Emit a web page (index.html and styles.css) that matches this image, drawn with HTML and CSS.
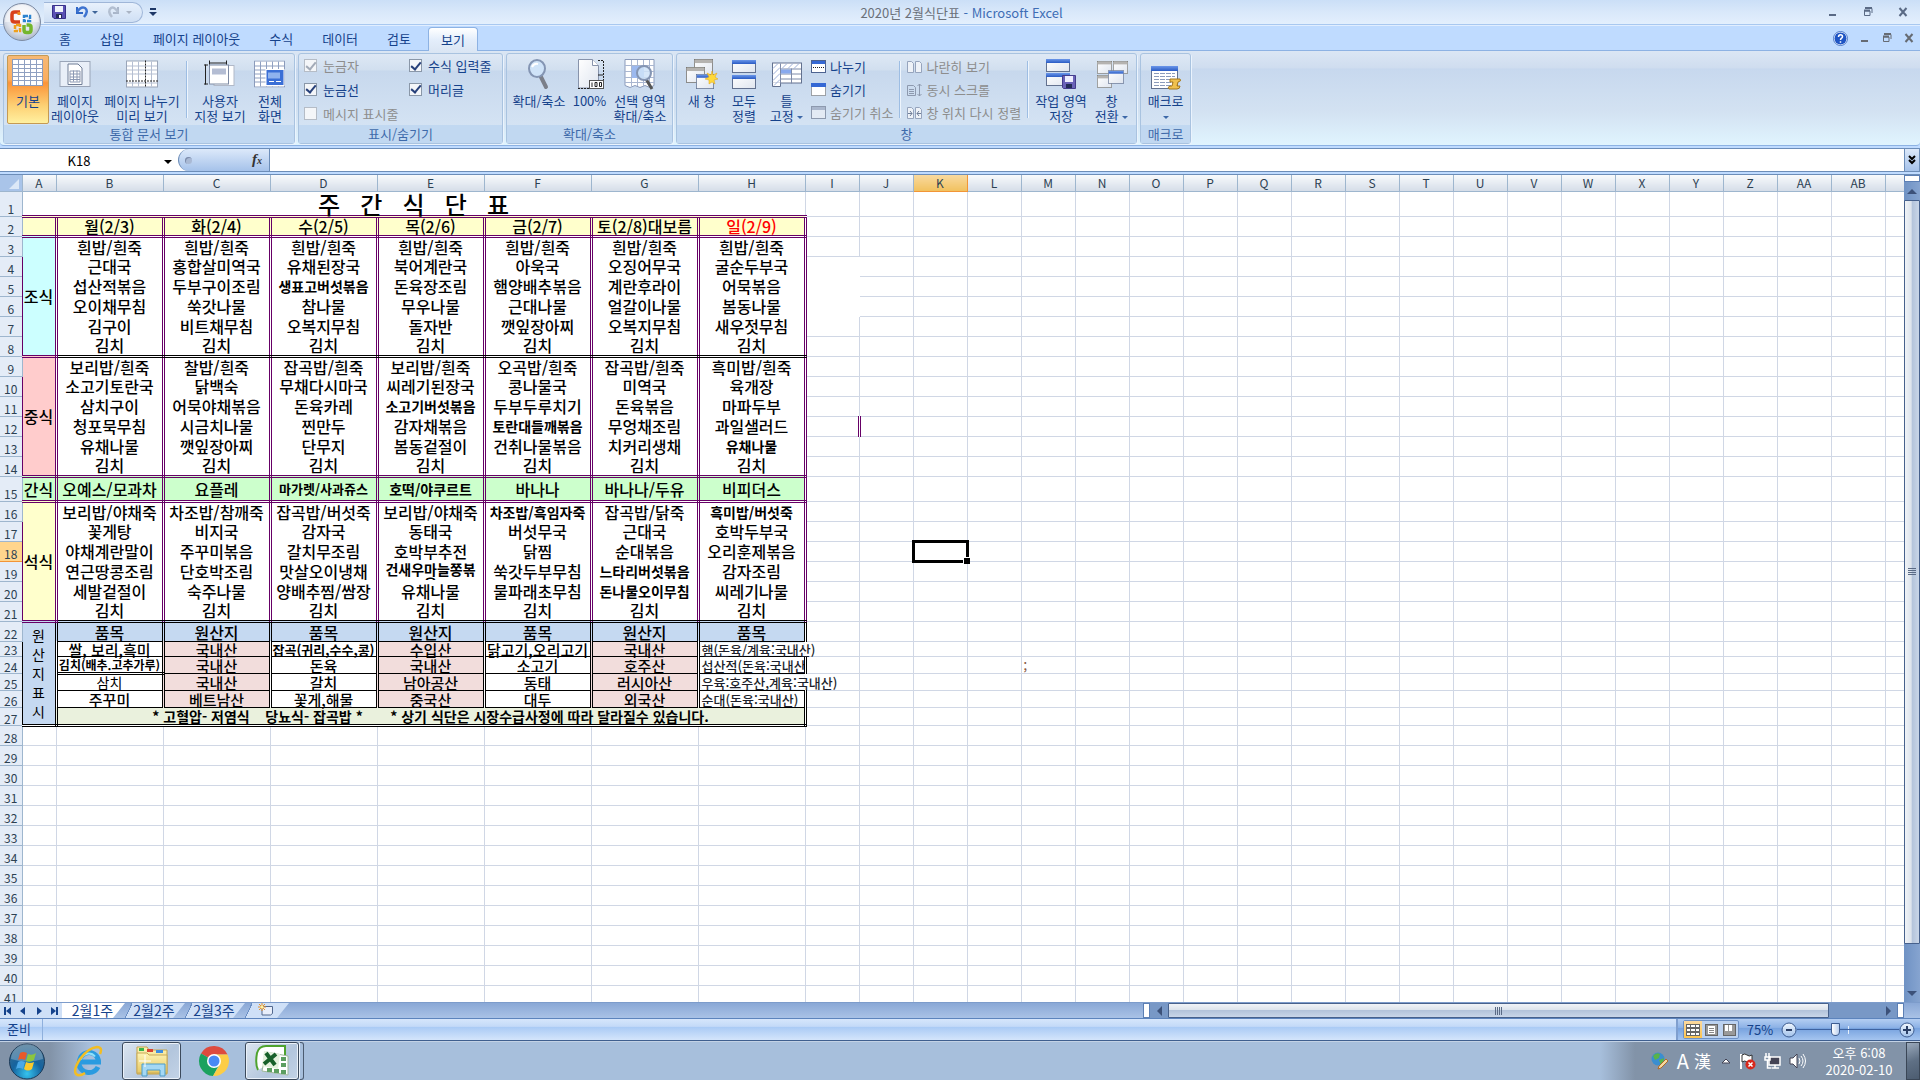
FILE: index.html
```
<!DOCTYPE html>
<html lang="ko">
<head>
<meta charset="utf-8">
<title>2020년 2월식단표 - Microsoft Excel</title>
<link rel="stylesheet" href="styles.css">
</head>
<body>
<svg class="defs" aria-hidden="true">
    <defs>
        <linearGradient id="blueBar" x1="0" y1="0" x2="0" y2="1"><stop offset="0" stop-color="#6b97ea"/><stop offset="1" stop-color="#2a5bc4"/></linearGradient>
        <linearGradient id="paper" x1="0" y1="0" x2="1" y2="1"><stop offset="0" stop-color="#fff"/><stop offset="1" stop-color="#dfe5ef"/></linearGradient>
        <linearGradient id="glass" x1="0" y1="0" x2="0" y2="1"><stop offset="0" stop-color="#f2f8ff"/><stop offset="1" stop-color="#9fc0ea"/></linearGradient>
        <radialGradient id="orb" cx="50%" cy="85%" r="85%"><stop offset="0" stop-color="#35c3ee"/><stop offset=".5" stop-color="#15639f"/><stop offset="1" stop-color="#3d6d8d"/></radialGradient>
        <radialGradient id="office" cx="50%" cy="35%" r="70%"><stop offset="0" stop-color="#fff"/><stop offset=".6" stop-color="#dfe3ec"/><stop offset="1" stop-color="#a2aec2"/></radialGradient>
        <linearGradient id="folder" x1="0" y1="0" x2="0" y2="1"><stop offset="0" stop-color="#fdf3b4"/><stop offset="1" stop-color="#e8c964"/></linearGradient>
        <symbol id="win" viewBox="0 0 24 20">
            <rect x=".5" y=".5" width="23" height="19" fill="url(#paper)" stroke="#62718f"/>
            <rect x="1" y="1" width="22" height="4" fill="url(#blueBar)"/>
        </symbol>
        <symbol id="wingray" viewBox="0 0 24 20">
            <rect x=".5" y=".5" width="23" height="19" fill="url(#paper)" stroke="#77756f"/>
            <rect x="1" y="1" width="22" height="4" fill="#b5b3b0"/>
        </symbol>
        <symbol id="sheet" viewBox="0 0 31 27">
            <rect x=".5" y=".5" width="30" height="26" fill="#fff" stroke="#8b9bbb"/>
            <path d="M6.500 1v25M12.500 1v25M18.500 1v25M24.500 1v25M1 5.500h29M1 9.500h29M1 13.500h29M1 17.500h29M1 21.500h29" stroke="#8fa0c1"/>
        </symbol>
    </defs>
</svg>

<header class="titlebar">
    <button class="office" aria-label="Office 단추">
        <svg width="40" height="40" viewBox="0 0 40 40">
            <circle cx="20" cy="20" r="18.500" fill="url(#office)" stroke="#7d8ba3"/>
            <path d="M3 20a17 17 0 0 1 34 0z" fill="#fff" opacity=".45"/>
            <path d="M18 10h-5q-3 0-3 2.500v5q0 2.500 3 2.500h5" fill="none" stroke="#d8401c" stroke-width="3.500"/>
            <path d="M17 10v3" stroke="#f08a1c" stroke-width="3"/>
            <path d="M22 14h6v5h-6z" fill="none" stroke="#2c83cf" stroke-width="2.500" stroke-dasharray="4 1"/>
            <path d="M18 23h-5v6h5z" fill="none" stroke="#f0a01c" stroke-width="2.500" stroke-dasharray="4 1"/>
            <path d="M22 23v5q0 2.500 2.500 2.500h2q2.500 0 2.500-2.500v-3q0-2-2.500-2h-2" fill="none" stroke="#74b62c" stroke-width="3.500"/>
        </svg>
    </button>
    <div class="qat">
        <button aria-label="저장"><svg width="14" height="14" viewBox="0 0 14 14"><path d="M.500.500h13v13H2L.500 12z" fill="#5a50b4" stroke="#37308a"/><rect x="3" y="1" width="8" height="6" fill="#eef2fb"/><rect x="4" y="9" width="6" height="4" fill="#222b55"/><rect x="7" y="10" width="2" height="3" fill="#fff"/></svg></button>
        <button aria-label="실행 취소"><svg width="23" height="14" viewBox="0 0 23 14"><path d="M2 2v6h6" fill="none" stroke="#2f66c6" stroke-width="2"/><path d="M2 7Q6 1 10 3q4 3-1 9" fill="none" stroke="#3f74d0" stroke-width="2.500"/><path d="M17 6h6l-3 3z" fill="#3f6599"/></svg></button>
        <button aria-label="다시 실행"><svg width="25" height="14" viewBox="0 0 25 14"><path d="M11 2v6H6" fill="none" stroke="#a9b6ca" stroke-width="2"/><path d="M11 7Q7 1 4 3q-4 3 1 9" fill="none" stroke="#b3bfd1" stroke-width="2.500"/><path d="M19 6h6l-3 3z" fill="#aab4c4"/></svg></button>
    </div>
    <button class="qat-more" aria-label="사용자 지정"><svg width="8" height="8" viewBox="0 0 8 8"><path d="M1 1h6" stroke="#1d3767" stroke-width="2"/><path d="M0 4h8L4 8z" fill="#1d3767"/></svg></button>
    <h1><span>2020년 2월식단표</span> - Microsoft Excel</h1>
    <div class="winbtns">
        <button aria-label="최소화"><svg width="10" height="10" viewBox="0 0 10 10"><path d="M1 8h7" stroke="#5a6a85" stroke-width="2"/></svg></button>
        <button aria-label="이전 크기로"><svg width="10" height="10" viewBox="0 0 10 10"><path d="M2 1.500h7V6M1 4h6v4.500H1.500V4" fill="none" stroke="#5a6a85"/><path d="M1 3.500h6M2 1h7" stroke="#5a6a85" stroke-width="2"/></svg></button>
        <button aria-label="닫기"><svg width="10" height="10" viewBox="0 0 10 10"><path d="M1.500 1l7 8M8.500 1l-7 8" stroke="#5a6a85" stroke-width="2"/></svg></button>
    </div>
</header>

<nav class="tabs">
    <button>홈</button><button>삽입</button><button>페이지 레이아웃</button><button>수식</button><button>데이터</button><button>검토</button><button class="active">보기</button>
    <div class="docbtns">
        <button aria-label="도움말"><svg width="15" height="15" viewBox="0 0 15 15"><circle cx="7.500" cy="7.500" r="6.500" fill="#1f55c4" stroke="#fff"/><circle cx="7.500" cy="7.500" r="7" fill="none" stroke="#4c78c8"/><path d="M5.500 6q0-2.300 2-2.300t2 2q0 1-1.200 1.700-.8.600-.8 1.600M7.500 10.300v1.500" fill="none" stroke="#fff" stroke-width="1.500"/></svg></button>
        <button aria-label="창 최소화"><svg width="10" height="10" viewBox="0 0 10 10"><path d="M1 8h7" stroke="#666b73" stroke-width="2"/></svg></button>
        <button aria-label="창 복원"><svg width="10" height="10" viewBox="0 0 10 10"><path d="M2 1.500h7V6M1 4h6v4.500H1.500V4" fill="none" stroke="#666b73"/><path d="M1 3.500h6M2 1h7" stroke="#666b73" stroke-width="2"/></svg></button>
        <button aria-label="창 닫기"><svg width="10" height="10" viewBox="0 0 10 10"><path d="M1.500 1l7 8M8.500 1l-7 8" stroke="#666b73" stroke-width="2"/></svg></button>
    </div>
</nav>

<div class="ribbon">
    <section class="group">
        <div class="tools">
            <button class="big on"><svg width="32" height="28"><use href="#sheet" width="31" height="27"/></svg><span>기본</span></button>
            <button class="big w52"><svg width="32" height="28" viewBox="0 0 32 28"><rect x="1" y="1" width="30" height="25" fill="#e9eff8" stroke="#9aa5b8"/><path d="M9 3.500h10l4 4V24H9z" fill="#fff" stroke="#6f7d96"/><path d="M11 10.500h10v11H11zM11 13.500h10M11 16.500h10M11 19h10M14.500 10v11M18 10v11" fill="none" stroke="#8b98b3"/></svg><span>페이지<br>레이아웃</span></button>
            <button class="big w82"><svg width="32" height="28" viewBox="0 0 32 28"><rect x=".5" y=".5" width="31" height="26" fill="#fff" stroke="#9aa5b8"/><path d="M6.500 1v25M12.500 1v25M25.500 1v25M1 5.500h30M1 9.500h30M1 13.500h30M1 22.500h30" stroke="#b5bfd2"/><path d="M19.500 0v27M0 20.500h32" stroke="#222" stroke-dasharray="2 1"/></svg><span>페이지 나누기<br>미리 보기</span></button>
            <i class="sep"></i>
            <button class="big w58"><svg width="32" height="28" viewBox="0 0 32 28"><rect x="10" y="5" width="20" height="20" fill="#fff" stroke="#b1b9c8"/><rect x="5.500" y="4.500" width="19" height="19" fill="#fff" stroke="#7d8aa3"/><rect x="8" y="8" width="14" height="6" fill="#b4bdd3"/><path d="M1.500 4v20M0 4.500h4M0 23.500h4M5 2.500h18M5.500 0v4M22.500 0v4" stroke="#222"/></svg><span>사용자<br>지정 보기</span></button>
            <button class="big w40"><svg width="32" height="28" viewBox="0 0 32 28"><use href="#sheet" width="31" height="27"/><rect x="12" y="9" width="18" height="16" fill="#3b6fd6" stroke="#fff"/><rect x="14" y="12" width="12" height="6" fill="#8fb2ee"/><path d="M15 21h12" stroke="#fff" stroke-dasharray="5 2"/></svg><span>전체<br>화면</span></button>
        </div>
        <h2>통합 문서 보기</h2>
    </section>

    <section class="group show">
        <div class="tools checks">
            <label class="off"><input type="checkbox" checked disabled>눈금자</label>
            <label><input type="checkbox" checked>수식 입력줄</label>
            <label><input type="checkbox" checked>눈금선</label>
            <label><input type="checkbox" checked>머리글</label>
            <label class="off"><input type="checkbox" disabled>메시지 표시줄</label>
        </div>
        <h2>표시/숨기기</h2>
    </section>

    <section class="group">
        <div class="tools">
            <button class="big w58"><svg width="32" height="31" viewBox="0 0 32 31"><path d="M17 16l6 12" stroke="#7b7f89" stroke-width="4" stroke-linecap="round"/><ellipse cx="14" cy="9.500" rx="8" ry="8.500" fill="#cfe3f8" stroke="#8495b3" stroke-width="2"/><path d="M9 8q2-4 6-3" stroke="#fff" stroke-width="2" fill="none"/></svg><span>확대/축소</span></button>
            <button class="big w44"><svg width="32" height="31" viewBox="0 0 32 31"><path d="M4.500.500h14l6 6V29h-20z" fill="url(#paper)" stroke="#8793ab"/><path d="M18.500.500v6h6" fill="#fff" stroke="#8793ab"/><path d="M24 1.500h5.500V28M4 29.500h12" fill="none" stroke="#222" stroke-dasharray="2 1"/><path d="M24 16h5" stroke="#222"/><rect x="15.500" y="21.500" width="14" height="8" fill="#fff" stroke="#555"/><path d="M18 23.500v4.500M21 23.500h2v4h-2zM25.500 23.500h2v4h-2z" fill="none" stroke="#222"/></svg><span>100%</span></button>
            <button class="big w58"><svg width="32" height="31" viewBox="0 0 32 31"><path d="M1 .500h29v26l-4 2-5-2-5 2-5-2-5 2-5-2z" fill="#fff" stroke="#8b9bbb"/><path d="M7.500 1v26M13.500 1v26M19.500 1v26M25.500 1v26M1 6.500h29M1 12.500h29M1 18.500h29M1 23.500h29" stroke="#a9b6d0"/><rect x="8" y="7" width="12" height="12" fill="#9cb9ef"/><path d="M22 20l6 10" stroke="#555" stroke-width="3"/><circle cx="20" cy="14" r="7" fill="#cfe3f8" fill-opacity=".85" stroke="#8495b3" stroke-width="2"/></svg><span>선택 영역<br>확대/축소</span></button>
        </div>
        <h2>확대/축소</h2>
    </section>

    <section class="group">
        <div class="tools">
            <button class="big w44"><svg width="32" height="31" viewBox="0 0 32 31"><use href="#wingray" x="8" y="0" width="19" height="16"/><use href="#wingray" x="0" y="8" width="19" height="16"/><use href="#win" x="10" y="15" width="18" height="15"/><path d="M26 12l1 4 4-2-2 4 3 2-4 1 1 4-3-2-3 2 0-4-4-1 4-2-2-4 4 2z" fill="#ffd93b" stroke="#e0a010" stroke-width=".5"/></svg><span>새 창</span></button>
            <button class="big w40"><svg width="26" height="31" viewBox="0 0 26 31"><rect x="1.500" y="1.500" width="23" height="12" fill="url(#paper)" stroke="#62718f"/><rect x="1" y="1" width="24" height="4" fill="url(#blueBar)"/><rect x="1.500" y="16.500" width="23" height="13" fill="url(#paper)" stroke="#62718f"/><rect x="1" y="16" width="24" height="4" fill="url(#blueBar)"/></svg><span>모두<br>정렬</span></button>
            <button class="big w44"><svg width="32" height="28" viewBox="0 0 32 28"><rect x="1.500" y="2.500" width="29" height="20" fill="#fff" stroke="#62718f"/><path d="M1.500 22v4h8v-4" fill="#fff" stroke="#62718f"/><path d="M9.500 3v20M20.500 8v15M10 8.500h20M10 13.500h20M10 18.500h20" stroke="#7d8aa8"/><path d="M2 8l5-5M2 14l7-7M2 20l7-7M3 25l6-6M11 8l5-5M17 8l5-5M23 8l5-5" stroke="#9db0da"/><rect x="10" y="9" width="10" height="4" fill="#88a9ee"/></svg><span>틀<br>고정 <b class="dd"></b></span></button>
            <div class="list">
                <button><svg width="15" height="14" viewBox="0 0 15 14"><rect x=".5" y=".5" width="14" height="12" fill="#fff" stroke="#4d6390"/><rect x="1" y="1" width="13" height="3" fill="#3568d4"/><path d="M2 7.500h11" stroke="#222" stroke-dasharray="1 1"/></svg>나누기</button>
                <button><svg width="15" height="14" viewBox="0 0 15 14"><rect x=".5" y=".5" width="14" height="12" fill="#fff" stroke="#555" stroke-dasharray="1 1"/><rect x="0" y="0" width="15" height="4" fill="#3568d4"/></svg>숨기기</button>
                <button class="off"><svg width="15" height="14" viewBox="0 0 15 14"><rect x=".5" y=".5" width="14" height="12" fill="#e3eaf4" stroke="#8d99ae"/><rect x="1" y="1" width="13" height="3" fill="#aab7cd"/></svg>숨기기 취소</button>
            </div>
            <i class="sep"></i>
            <div class="list">
                <button class="off"><svg width="15" height="14" viewBox="0 0 15 14"><path d="M.500 1.500h4l2 2v9h-6zM8.500 1.500h4l2 2v9h-6z" fill="#eef2f8" stroke="#96a4bd"/></svg>나란히 보기</button>
                <button class="off"><svg width="15" height="14" viewBox="0 0 15 14"><path d="M.500 2.500h6l2 2v8h-8zM2 6.500h5M2 8.500h5M2 10.500h5M12.500 1v12M10.500 3l2-2 2 2M10.500 11l2 2 2-2" fill="none" stroke="#8d99ae"/></svg>동시 스크롤</button>
                <button class="off"><svg width="15" height="14" viewBox="0 0 15 14"><path d="M.500 1.500h4l2 2v9h-6zM8.500 1.500h4l2 2v9h-6z" fill="#eef2f8" stroke="#96a4bd"/><path d="M1 7.500h4M3 5l2 2.500L3 10M14 7.500h-4M12 5l-2 2.500 2 2.500" fill="none" stroke="#6f7e99"/></svg>창 위치 다시 정렬</button>
            </div>
            <i class="sep"></i>
            <button class="big w58"><svg width="32" height="31" viewBox="0 0 32 31"><rect x="1.500" y=".5" width="23" height="12" fill="url(#paper)" stroke="#62718f"/><rect x="1" y="0" width="24" height="4" fill="url(#blueBar)"/><rect x="1.500" y="14.500" width="23" height="12" fill="url(#paper)" stroke="#62718f"/><rect x="1" y="14" width="24" height="4" fill="url(#blueBar)"/><path d="M17.500 16.500h13v13h-12l-1-1z" fill="#6a62b8" stroke="#443c8c"/><rect x="20" y="17" width="8" height="6" fill="#eef"/><rect x="21" y="25" width="6" height="4" fill="#222b55"/></svg><span>작업 영역<br>저장</span></button>
            <button class="big w44"><svg width="32" height="31" viewBox="0 0 32 31"><use href="#wingray" x="1" y="2" width="15" height="13"/><use href="#wingray" x="17" y="2" width="15" height="13"/><use href="#wingray" x="1" y="16" width="15" height="13"/><use href="#win" x="12" y="11" width="16" height="14"/></svg><span>창<br>전환 <b class="dd"></b></span></button>
        </div>
        <h2>창</h2>
    </section>

    <section class="group">
        <div class="tools">
            <button class="big w44"><svg width="32" height="31" viewBox="0 0 32 31"><rect x="1.500" y="7.500" width="26" height="22" fill="#fff" stroke="#62718f"/><rect x="1" y="7" width="27" height="5" fill="url(#blueBar)"/><path d="M4 14.500h21M4 17.500h21M4 20.500h21M4 23.500h21M4 26.500h21" stroke="#8b9bbb" stroke-dasharray="5 1"/><path d="M20 20h10q2 2-2 3l-1 4h3q0 3-3 3h-8q-2-2 1-3h2l1-4h-3z" fill="#f0c14e" stroke="#a3761a"/></svg><span>매크로<br><b class="dd"></b></span></button>
        </div>
        <h2>매크로</h2>
    </section>
</div>

<div class="formula">
    <input class="namebox" value="K18" aria-label="이름 상자">
    <button class="namedrop" aria-label="이름 목록"><b class="dd"></b></button>
    <div class="fx"><i></i><button aria-label="함수 삽입">f<sub>x</sub></button></div>
    <input class="fxinput" aria-label="수식 입력줄">
    <button class="expand" aria-label="수식 입력줄 확장"><svg width="8" height="10" viewBox="0 0 8 10"><path d="M1 1l3 3 3-3M1 5l3 3 3-3" fill="none" stroke="#000" stroke-width="2"/></svg></button>
</div>

<main class="work">
    <div class="gridwrap"><table id="grid"></table></div>
    <div class="vscroll">
        <i class="split"></i>
        <button aria-label="위로"><svg width="10" height="5"><path d="M0 5h10L5 0z" fill="#3c5179"/></svg></button>
        <div class="track"><div class="thumb"><i></i></div></div>
        <button aria-label="아래로"><svg width="10" height="5"><path d="M0 0h10L5 5z" fill="#3c5179"/></svg></button>
    </div>
</main>

<div class="sheetbar">
    <div class="sheetnav">
        <button aria-label="첫 시트"><svg width="8" height="8"><path d="M1 0v8" stroke="#15428b" stroke-width="2"/><path d="M7 0v8L2 4z" fill="#15428b"/></svg></button>
        <button aria-label="이전 시트"><svg width="8" height="8"><path d="M6 0v8L1 4z" fill="#15428b"/></svg></button>
        <button aria-label="다음 시트"><svg width="8" height="8"><path d="M2 0v8l5-4z" fill="#15428b"/></svg></button>
        <button aria-label="마지막 시트"><svg width="8" height="8"><path d="M7 0v8" stroke="#15428b" stroke-width="2"/><path d="M1 0v8l5-4z" fill="#15428b"/></svg></button>
    </div>
    <button class="sheettab active">2월1주</button>
    <button class="sheettab">2월2주</button>
    <button class="sheettab">2월3주</button>
    <button class="sheettab new" aria-label="워크시트 삽입"><svg width="16" height="13" viewBox="0 0 16 13"><path d="M4 3.500h10.500v7l-2 1.500H4z" fill="#e8eefa" stroke="#52688f"/><path d="M4 0v8M0 4h8M1 1l6 6M7 1L1 7" stroke="#e8922a"/><circle cx="4" cy="4" r="1.500" fill="#fff3a0"/></svg></button>
    <div class="hscroll">
        <i class="split"></i>
        <button aria-label="왼쪽"><svg width="5" height="10"><path d="M5 0v10L0 5z" fill="#3c5179"/></svg></button>
        <div class="track"><div class="thumb"><i></i></div></div>
        <button aria-label="오른쪽"><svg width="5" height="10"><path d="M0 0v10l5-5z" fill="#3c5179"/></svg></button>
        <i class="split"></i>
    </div>
</div>

<div class="status">
    <span class="ready">준비</span>
    <div class="statusright">
        <div class="views">
            <button class="on" aria-label="기본"><svg width="14" height="12" viewBox="0 0 14 12"><rect width="14" height="12" fill="#666"/><path d="M1 1h3v2H1zM5 1h4v2H5zM10 1h3v2h-3zM1 5h3v2H1zM5 5h4v2H5zM10 5h3v2h-3zM1 9h3v2H1zM5 9h4v2H5zM10 9h3v2h-3z" fill="#fff"/></svg></button>
            <button aria-label="페이지 레이아웃"><svg width="13" height="12" viewBox="0 0 13 12"><rect x=".5" y=".5" width="12" height="11" fill="#999" stroke="#666"/><path d="M3 2h7v8H3z" fill="#fff"/><path d="M4 4.500h5M4 6.500h5M4 8.500h5" stroke="#888"/></svg></button>
            <button aria-label="페이지 나누기 미리 보기"><svg width="13" height="12" viewBox="0 0 13 12"><rect x=".5" y=".5" width="12" height="11" fill="#999" stroke="#666"/><path d="M2 1h3v6H2zM6 1h3v6H6z" fill="#fff"/></svg></button>
        </div>
        <span class="pct">75%</span>
        <button class="round" aria-label="축소"><svg width="16" height="16" viewBox="0 0 16 16"><circle cx="8" cy="8" r="7" fill="url(#glass)" stroke="#3d5c90"/><path d="M5 8h6" stroke="#2b3f66" stroke-width="2"/></svg></button>
        <input type="range" min="0" max="100" value="37" aria-label="확대/축소 비율">
        <button class="round" aria-label="확대"><svg width="16" height="16" viewBox="0 0 16 16"><circle cx="8" cy="8" r="7" fill="url(#glass)" stroke="#3d5c90"/><path d="M4 8h8M8 4v8" stroke="#2b3f66" stroke-width="2"/></svg></button>
    </div>
</div>

<footer class="taskbar">
    <button class="start" aria-label="시작"><svg width="38" height="37" viewBox="0 0 38 37"><circle cx="19" cy="18.500" r="17.500" fill="url(#orb)" stroke="#1d3a57"/><path d="M3 16a16 15 0 0 1 32 0q-16 5-32 0z" fill="#fff" opacity=".25"/><path d="M12 10q3-2 7 0l-2 7q-4-2-7 0z" fill="#e8592a"/><path d="M20 11q4 2 8-1l-2 7q-4 3-8 1z" fill="#8cc63e"/><path d="M10 19q3-2 7 0l-2 7q-4-2-7 0z" fill="#4aa8e8"/><path d="M18 19q4 2 8 0l-2 7q-4 3-8 0z" fill="#fbc92c"/></svg></button>
    <button class="app ie" aria-label="Internet Explorer"><svg width="32" height="32" viewBox="0 0 32 32"><path d="M7.500 17a9.500 9.500 0 1 1 19 0H8M26 22q-3 6-10 5.500A9.500 9.500 0 0 1 7 17" fill="none" stroke="#2a9be0" stroke-width="5"/><path d="M9 14.500a8 8 0 0 1 14-3" fill="none" stroke="#8fe0fa" stroke-width="2"/><path d="M28 9q3-7-3-7Q16 3 8 14 1 25 4 29q3 3 9-1" fill="none" stroke="#f3bd22" stroke-width="2.500"/></svg></button>
    <button class="app open" aria-label="탐색기"><svg width="36" height="34" viewBox="0 0 36 34"><path d="M3 7V3h10l2 3h18v24H3z" fill="url(#folder)" stroke="#c3a24a"/><path d="M5 4h5v3H5z" fill="#3bb54a"/><path d="M13 5h6v3h-6z" fill="#d9432f"/><path d="M22 6h7v3h-7z" fill="#3f8ee0"/><path d="M3 9h10l2 2h18v18H3z" fill="url(#folder)" stroke="#c9aa58"/><path d="M8 32V20h23v12h-5v-6H13v6z" fill="#a5d8f4" stroke="#4d9cc9"/><path d="M11 11v12M5 17h12" stroke="#fff"/></svg></button>
    <button class="app" aria-label="Chrome"><svg width="32" height="32" viewBox="0 0 32 32"><path d="M16 16L3 8.500A15 15 0 0 1 29.500 9.500H16z" fill="#dd4b3e"/><path d="M16 16L3 8.500A15 15 0 0 0 15 31l6.500-12z" fill="#1aa25f"/><path d="M16 9.500h13.500A15 15 0 0 1 15 31l7-12z" fill="#fdcd45"/><circle cx="16" cy="16" r="7" fill="#fff"/><circle cx="16" cy="16" r="5.500" fill="#4889f4"/></svg></button>
    <button class="app open excel" aria-label="Microsoft Excel"><svg width="36" height="34" viewBox="0 0 36 34"><path d="M4 26Q1 20 3 9 5 2 12 2h19v9" fill="#fff" stroke="#4fa32e" stroke-width="2"/><path d="M12 8l22 4v19L8 27z" fill="#fff" stroke="#9fb89a"/><path d="M10 7l16 3-2 15-16-3z" fill="#e3f0dc"/><path d="M12 9l9 12M22 10L10 20" stroke="#17602a" stroke-width="4"/><path d="M27 13h5v4h-5zM27 19h5v4h-5zM20 25h5v4h-5zM13 24h5v4h-5zM27 26h5v4h-5z" fill="#5c9e60"/></svg></button>
    <i class="stack"></i>
    <div class="tray">
        <svg width="18" height="18" viewBox="0 0 18 18"><circle cx="7" cy="7" r="6.500" fill="#3a8ed0"/><path d="M2 4q3-4 7-2l-1 4-4 2zM8 8l5-2q0 4-3 7z" fill="#59b34a"/><path d="M15 7l2 2-7 7-3 1 1-3z" fill="#f5d9a0" stroke="#b06b28"/></svg>
        <span class="ime">A</span><span class="ime han">漢</span>
        <button aria-label="숨겨진 아이콘"><svg width="10" height="6"><path d="M1 5h8L5 1z" fill="#fff" stroke="#445"/></svg></button>
        <svg width="17" height="17" viewBox="0 0 17 17"><path d="M2 1v15" stroke="#fff" stroke-width="2"/><path d="M3 2q3-2 5 0t5 0v7q-3 2-5 0t-5 0z" fill="#fff" stroke="#333"/><circle cx="11.500" cy="11.500" r="5" fill="#d8281c"/><path d="M9.500 9.500l4 4M13.500 9.500l-4 4" stroke="#fff" stroke-width="1.500"/></svg>
        <svg width="17" height="17" viewBox="0 0 17 17"><rect x="5" y="4" width="11" height="8" fill="#445" stroke="#fff" stroke-width="1.500"/><path d="M8 15h7M11 12v3M2 0v4M5 0v4M1 4h5v3H1zM3.500 7v8h4" fill="none" stroke="#fff" stroke-width="1.500"/></svg>
        <svg width="17" height="16" viewBox="0 0 17 16"><path d="M1 5h3l4-4v14l-4-4H1z" fill="#fff" stroke="#445"/><path d="M10 5q2 3 0 6M12 3q4 5 0 10M14 1q5 7 0 14" fill="none" stroke="#fff"/></svg>
        <div class="clock"><span>오후 6:08</span><span>2020-02-10</span></div>
        <button class="desktop" aria-label="바탕 화면 보기"></button>
    </div>
</footer>
<script src="script.js"></script>
</body>
</html>
```
FILE: styles.css
```
* {
    box-sizing: border-box;
}
html, body {
    height: 100%;
}
body {
    margin: 0;
    display: flex;
    flex-direction: column;
    overflow: hidden;
    background: #bfdbff;
    color: #15428b;
    font: 13px/15px "Noto Sans CJK KR", sans-serif;
}
button, input {
    font: inherit;
    color: inherit;
    margin: 0;
    padding: 0;
    border: 0;
    background: none;
}
button {
    white-space: nowrap;
}
svg {
    display: block;
    flex: none;
}
i {
    display: block;
    flex: none;
}
.defs {
    position: absolute;
    width: 0;
    height: 0;
}
.dd {
    display: inline-block;
    border: 3px solid transparent;
    border-top-color: #3d68a8;
    border-bottom: 0;
    vertical-align: middle;
}

/* title bar */
.titlebar {
    position: relative;
    display: flex;
    align-items: center;
    height: 25px;
    flex: none;
    padding-left: 44px;
    background: linear-gradient(#cbdff7, #d9e8fa 50%, #e3effd);
    border-bottom: 1px solid #a8c8f0;
}
.office {
    position: absolute;
    left: 2px;
    top: 2px;
    z-index: 2;
}
.qat {
    display: flex;
    align-items: center;
    gap: 9px;
    height: 21px;
    width: 99px;
    padding-left: 8px;
    border: 1px solid #9fb6d8;
    border-left: 0;
    border-radius: 0 11px 11px 0;
    background: linear-gradient(#e8f1fc, #cfdff4);
}
.qat-more {
    margin-left: 6px;
}
.titlebar h1 {
    flex: 1;
    margin: 0;
    padding-right: 62px;
    text-align: center;
    font-size: 13px;
    font-weight: 400;
    color: #3e6db5;
}
.titlebar h1 span {
    color: #6a7079;
}
.winbtns {
    display: flex;
    gap: 25px;
    padding-right: 12px;
}

/* tabs */
.tabs {
    display: flex;
    align-items: flex-end;
    height: 26px;
    flex: none;
    padding-left: 44px;
    border-bottom: 1px solid #8db2e3;
    border-top: 1px solid #e1eeff;
}
.tabs > button {
    height: 23px;
    padding: 0 12px;
    margin: 0 2px 0 3px;
}
.tabs .active {
    height: 24px;
    margin-bottom: -1px;
    border: 1px solid #8db2e3;
    border-bottom: 0;
    border-radius: 4px 4px 0 0;
    background: linear-gradient(#fff, #e4eefb 50%, #dbe6f4);
}
.docbtns {
    display: flex;
    align-items: center;
    gap: 12px;
    height: 24px;
    margin-left: auto;
    padding-right: 6px;
}

/* ribbon */
.ribbon {
    display: flex;
    gap: 3px;
    flex: none;
    padding: 2px 3px 1px;
    margin-bottom: 2px;
    border-bottom: 1px solid #8db2e3;
    border-radius: 0 0 4px 4px;
    background: linear-gradient(#dbe6f4, #cfddef 18%, #c7d8ee 19%, #d3e2f2 65%, #e0f4fe);
}
.group {
    border: 1px solid #a9c3e0;
    border-radius: 3px;
    box-shadow: 1px 1px 0 #eaf3fd;
    background: linear-gradient(#dee8f5, #d1dfef 18%, #c7d8ed 19%, #d8e6f5);
}
.group h2 {
    margin: 0;
    height: 18px;
    line-height: 17px;
    text-align: center;
    font-size: 13px;
    font-weight: 400;
    color: #3e6aaa;
    background: #c1d8f1;
}
.tools {
    display: flex;
    height: 71px;
    padding: 1px 3px;
}
.big {
    display: flex;
    flex-direction: column;
    align-items: center;
    width: 42px;
    padding-top: 4px;
    text-align: center;
    line-height: 15px;
}
.big svg {
    height: 31px;
    margin-bottom: 3px;
}
.big.on {
    border: 1px solid #c59a53;
    border-radius: 2px;
    padding-top: 3px;
    background: linear-gradient(#f6b976, #fcae5e 35%, #fb9338 40%, #fdd276 75%, #fff0a0);
}
.w40 { width: 42px; }
.w44 { width: 43px; }
.w52 { width: 52px; }
.w58 { width: 58px; }
.w82 { width: 82px; }
.sep {
    width: 2px;
    margin: 6px 3px;
    border-left: 1px solid #9dbde3;
    border-right: 1px solid #eef5fd;
}
.list {
    display: flex;
    flex-direction: column;
    justify-content: space-around;
    padding: 0 3px;
}
.list button {
    display: flex;
    align-items: center;
    gap: 4px;
}
.off {
    color: #8d8d8d;
}
.show {
    width: 205px;
}
.checks {
    display: grid;
    grid-template-columns: 105px auto;
    align-content: space-around;
    padding: 0 5px;
}
.checks label {
    display: flex;
    align-items: center;
    gap: 6px;
    white-space: nowrap;
}
.checks input {
    appearance: none;
    width: 13px;
    height: 13px;
    border: 1px solid #8a97a8;
    background: #f4f6f9;
    display: grid;
    place-items: center;
}
.checks input:checked::before {
    content: "";
    width: 4px;
    height: 8px;
    margin-top: -2px;
    border: solid #27407a;
    border-width: 0 2px 2px 0;
    transform: rotate(40deg);
}
.checks input:disabled {
    border-color: #b5bcc6;
}
.checks input:disabled::before {
    border-color: #a3abb8;
}

/* formula bar */
.formula {
    display: flex;
    height: 24px;
    flex: none;
    margin-bottom: 2px;
    border-top: 1px solid #6c8db8;
    border-bottom: 1px solid #6c8db8;
    background: #fff;
    color: #000;
}
.namebox {
    width: 158px;
    text-align: center;
}
.namedrop {
    width: 20px;
}
.namedrop .dd {
    border-width: 4px;
    border-bottom: 0;
    border-top-color: #000;
}
.fx {
    display: flex;
    align-items: center;
    justify-content: space-between;
    width: 92px;
    padding: 0 7px 0 6px;
    border-left: 1px solid #6c8db8;
    border-right: 1px solid #6c8db8;
    border-radius: 12px 0 0 12px;
    background: linear-gradient(#dce9fa, #a5c2ea);
}
.fx i {
    width: 7px;
    height: 7px;
    border-radius: 50%;
    background: #a9b9d4;
    box-shadow: inset 1px 1px 0 #7c8cab;
}
.fx button {
    font: italic 700 15px/18px "Liberation Serif", serif;
    color: #333;
}
.fx sub {
    font-size: 10px;
    vertical-align: baseline;
}
.fxinput {
    flex: 1;
}
.expand {
    display: grid;
    place-items: center;
    width: 16px;
    border: 1px solid #6c8db8;
    border-width: 0 1px;
    background: linear-gradient(#dce9fa, #a5c2ea);
}

/* sheet */
.work {
    display: flex;
    flex: 1;
    min-height: 0;
    border-top: 1px solid #6c8db8;
}
.gridwrap {
    flex: 1;
    min-width: 0;
    overflow: hidden;
    background: #fff;
}
#grid {
    width: 100%;
    table-layout: fixed;
    border-collapse: collapse;
    color: #000;
}
.cn { width: 22px; }
.ca { width: 34px; }
.cw { width: 107px; }
.cd { width: 54px; }
#grid th, #grid td {
    padding: 0;
    border: 1px solid #d0d7e5;
}
#grid th {
    font-weight: 400;
    font-size: 12px;
    line-height: 14px;
    color: #2c4152;
    background: #e4ecf7;
    border-color: #9eb6ce;
}
#grid thead th {
    background: linear-gradient(#f8fafc, #d5dde8);
    border-top: 0;
}
#grid tbody th {
    vertical-align: bottom;
    border-left: 0;
}
#grid thead th.corner {
    background: #a9c4e9;
    border-left: 0;
}
.corner::after {
    content: "";
    display: block;
    width: 0;
    margin: 2px 3px 0 auto;
    border: 5px solid #dce8f7;
    border-top-color: transparent;
    border-left-color: transparent;
}
#grid thead th.sel {
    background: linear-gradient(#f9d99f, #f1c15f);
    border-color: #f29536;
}
#grid tbody th.sel {
    background: #ffd58d;
    border-color: #f29536;
}
.hd { height: 16px; }
.r20 { height: 20px; }
.r25 { height: 25px; }
.r15 { height: 15px; }
.r17 { height: 17px; }
.r18 { height: 18px; }
#grid .r15 th, #grid .r17 th, #grid .r18 th {
    line-height: 13px;
}
.t {
    display: flex;
    justify-content: center;
    height: 16px;
    line-height: 16px;
    overflow-x: clip;
    overflow-y: visible;
    white-space: nowrap;
    font-size: 16px;
    font-weight: 500;
}
.r15 .t {
    height: 12px;
    line-height: 14px;
    font-size: 15px;
}
.r17 .t {
    height: 14px;
    line-height: 15px;
    font-size: 15px;
}
.r18 .t {
    height: 14px;
    line-height: 14px;
}
#grid .s14 { font-size: 14px; font-weight: 700; }
#grid .s13 { font-size: 13px; font-weight: 700; }
#grid .s12 { font-size: 12px; font-weight: 700; }
.t.wrap {
    display: block;
    height: 18px;
    padding: 0 4px;
    overflow: hidden;
    text-align: center;
    white-space: normal;
    word-break: break-all;
    line-height: 14px;
}
#grid .light {
    font-size: 14px;
    font-weight: 400;
}
#grid .plain {
    justify-content: flex-start;
    padding-left: 2px;
    color: #1c1f2b;
    font-size: 13px;
    font-weight: 500;
}
.t.spill {
    overflow: visible;
}
#grid .mark {
    justify-content: flex-start;
    padding-left: 2px;
    color: #8a5a44;
    font-size: 12px;
}
#grid td.title {
    border: 0;
    border-bottom: 3px double #660066;
}
.title .t {
    height: 23px;
    line-height: 24px;
    font-size: 24px;
}
#grid td.menu {
    border: 3px double #660066;
    border-top: 0;
    border-bottom: 0;
    background: #fff;
}
#grid td.day {
    border: 3px double #660066;
    background: #ffffcc;
}
#grid td.sunday {
    color: #ff0000;
}
#grid td.label {
    border: 3px double #660066;
    border-left: 1px solid #660066;
}
#grid td.endk {
    border-bottom: 3px double #000;
}
#grid td.end {
    border-bottom: 3px double #660066;
}
#grid td.snack {
    border: 3px double #660066;
    background: #ccffcc;
}
#grid td.org {
    border: 1px solid #000;
    border-left: 3px double #000;
    border-right: 3px double #000;
}
#grid td.split24 {
    border-bottom: 3px double #000;
}
#grid td.open {
    border-right-style: hidden;
}
#grid td.item { background: #fff; }
#grid td.orghead { background: #c5d9f1; }
#grid td.place { background: #f2dddc; }
#grid td.note {
    border: 3px double #000;
    border-top: 1px solid #000;
    background: #eaf1dd;
}
.note .t {
    white-space: pre;
}
#grid td.cyan { background: #ccffff; }
#grid td.pink { background: #ffcccc; }
#grid td.green { background: #ccffcc; }
#grid td.yellow { background: #ffffcc; }
#grid td.blue {
    background: #c5d9f1;
    border-color: #000;
}
.blue .t {
    display: block;
    height: auto;
    text-align: center;
    font-size: 14px;
    font-weight: 400;
    line-height: 19px;
}
#grid td.blank {
    border-top-color: #fff;
    border-right-color: #fff;
    border-bottom-color: #fff;
}
#grid td.bar {
    border-right: 3px double #660066;
}
#grid td.cursor {
    position: relative;
}
.cursor div {
    position: absolute;
    inset: -2px;
    border: 3px solid #000;
}
.cursor div::after {
    content: "";
    position: absolute;
    right: -4px;
    bottom: -4px;
    width: 6px;
    height: 6px;
    background: #000;
    border: solid #fff;
    border-width: 1px 0 0 1px;
}

/* scroll bars */
.vscroll {
    display: flex;
    flex-direction: column;
    align-items: center;
    width: 16px;
    background: linear-gradient(90deg, #6f92c4, #86a4d0);
}
.vscroll .split {
    width: 16px;
    height: 7px;
    border: 1px solid #5c7fb4;
    background: #fff;
}
.vscroll > button, .hscroll > button {
    display: grid;
    place-items: center;
    flex: none;
    width: 18px;
    height: 18px;
}
.vscroll .track {
    flex: 1;
    width: 16px;
    padding-bottom: 40px;
}
.thumb {
    display: grid;
    place-items: center;
    height: 100%;
    border: 1px solid #47618c;
    border-radius: 1px;
    background: linear-gradient(90deg, #f0f3f7, #dce3ec 45%, #b3c3da 50%, #c9d6e8);
}
.thumb i {
    width: 8px;
    height: 8px;
    background: repeating-linear-gradient(#5a6a85 0 1px, transparent 1px 2px);
}

/* sheet tabs */
.sheetbar {
    display: flex;
    height: 17px;
    flex: none;
    background: linear-gradient(#8aa8d6, #a9c2e6);
    border-top: 1px solid #7d9ccb;
    border-bottom: 1px solid #5c84bd;
}
.sheetnav {
    display: flex;
    justify-content: space-around;
    align-items: center;
    width: 62px;
    background: #cfe0f7;
}
.sheettab {
    width: 60px;
    padding: 0 2px 2px 0;
    font-size: 14px;
    line-height: 14px;
    background: linear-gradient(115deg, transparent 6px, #6b8fc4 6px 7px, #cfe0f7 7px);
    clip-path: polygon(0 0, 100% 0, calc(100% - 12px) 100%, 0 100%);
}
.sheettab.active {
    width: 63px;
    background: #fff;
}
.sheettab.new {
    width: 44px;
    display: grid;
    place-items: center;
}
.hscroll {
    display: flex;
    align-items: center;
    flex: none;
    width: calc(40% - 7px);
    margin-left: auto;
    margin-right: 16px;
    background: #7898c6;
}
.hscroll .split {
    width: 7px;
    height: 15px;
    border: 1px solid #5c7fb4;
    background: #fff;
}
.hscroll .track {
    flex: 1;
    height: 15px;
    padding-right: 50px;
}
.hscroll .thumb {
    background: linear-gradient(#f0f3f7, #dce3ec 45%, #b3c3da 50%, #c9d6e8);
}
.hscroll .thumb i {
    background: repeating-linear-gradient(90deg, #5a6a85 0 1px, transparent 1px 2px);
}

/* status bar */
.status {
    display: flex;
    align-items: center;
    height: 22px;
    flex: none;
    background: linear-gradient(#d6e6fb, #c4daf8 35%, #abcbf5 40%, #d4e5fb);
    border-bottom: 1px solid #3f5f8f;
}
.ready {
    padding: 2px 11px 4px 7px;
    border-right: 1px solid #8fb0dd;
}
.statusright {
    display: flex;
    align-items: center;
    align-self: stretch;
    margin-left: auto;
    padding: 0 5px;
    border-left: 2px solid #7f9fcf;
    background: linear-gradient(#b4cef2, #8db2e6 40%, #78a3df 45%, #a5c5f0);
}
.views {
    display: flex;
    border: 1px solid #6f92c6;
    background: #bcd2f0;
    border-radius: 2px;
}
.views button {
    display: grid;
    place-items: center;
    width: 18px;
    height: 17px;
}
.views .on {
    background: linear-gradient(#fbd9a0, #fdc44e);
}
.pct {
    width: 42px;
    text-align: center;
}
.statusright input {
    appearance: none;
    width: 102px;
    height: 16px;
    background: linear-gradient(#3d62a0, #3d62a0) center / 100% 1px no-repeat, linear-gradient(#e5effb, #e5effb) center / 1px 8px no-repeat;
}
.statusright input::-webkit-slider-thumb {
    appearance: none;
    width: 9px;
    height: 13px;
    border: 1px solid #3d5c90;
    border-radius: 1px 1px 5px 5px;
    background: linear-gradient(90deg, #fff, #b9cfee);
}

/* task bar */
.taskbar {
    display: flex;
    align-items: center;
    height: 39px;
    flex: none;
    background: linear-gradient(90deg, #8293a8 50px, #a7bfdc 90px, #a7bfdc calc(100% - 320px), #8293a8 calc(100% - 285px));
    border-top: 1px solid #c3d2e5;
    color: #fff;
}
.start {
    padding: 0 8px;
}
.app {
    display: grid;
    place-items: center;
    width: 59px;
    height: 38px;
}
.ie {
    width: 68px;
}
.open {
    border: 1px solid #3c4a5c;
    border-radius: 3px;
    box-shadow: inset 0 0 0 1px #eaf1f9;
    background: linear-gradient(135deg, #dbe5f0, #b3c6dd 60%, #c3d3e6);
    margin-right: 3px;
}
.excel {
    width: 54px;
    margin-left: 2px;
    margin-right: 0;
}
.stack {
    width: 5px;
    height: 38px;
    border: 1px solid #4b5b70;
    border-left-color: #eaf1f9;
    border-radius: 0 3px 3px 0;
}
.tray {
    display: flex;
    align-items: center;
    align-self: stretch;
    gap: 8px;
    margin-left: auto;
}
.ime {
    font-size: 20px;
    line-height: 24px;
    margin-right: -3px;
}
.han {
    font-size: 17px;
    margin-right: 2px;
}
.clock {
    display: flex;
    flex-direction: column;
    align-items: center;
    width: 90px;
    line-height: 17px;
}
.desktop {
    align-self: stretch;
    width: 14px;
    margin-left: -6px;
    border: 1px solid #3a4656;
    background: linear-gradient(160deg, #9aa9bb, #5f7085 50%, #4c5c70);
}
```
FILE: script.js
```
// Cells starting with a number and "|" use that font size.
var days = ['월(2/3)', '화(2/4)', '수(2/5)', '목(2/6)', '금(2/7)', '토(2/8)대보름', '일(2/9)'];
var menu = {
    3: ['흰밥/흰죽', '흰밥/흰죽', '흰밥/흰죽', '흰밥/흰죽', '흰밥/흰죽', '흰밥/흰죽', '흰밥/흰죽'],
    4: ['근대국', '홍합살미역국', '유채된장국', '북어계란국', '아욱국', '오징어무국', '굴순두부국'],
    5: ['섭산적볶음', '두부구이조림', '14|생표고버섯볶음', '돈육장조림', '햄양배추볶음', '계란후라이', '어묵볶음'],
    6: ['오이채무침', '쑥갓나물', '참나물', '무우나물', '근대나물', '얼갈이나물', '봄동나물'],
    7: ['김구이', '비트채무침', '오복지무침', '돌자반', '깻잎장아찌', '오복지무침', '새우젓무침'],
    8: ['김치', '김치', '김치', '김치', '김치', '김치', '김치'],
    9: ['보리밥/흰죽', '찰밥/흰죽', '잡곡밥/흰죽', '보리밥/흰죽', '오곡밥/흰죽', '잡곡밥/흰죽', '흑미밥/흰죽'],
    10: ['소고기토란국', '닭백숙', '무채다시마국', '씨레기된장국', '콩나물국', '미역국', '육개장'],
    11: ['삼치구이', '어묵야채볶음', '돈육카레', '14|소고기버섯볶음', '두부두루치기', '돈육볶음', '마파두부'],
    12: ['청포묵무침', '시금치나물', '찐만두', '감자채볶음', '14|토란대들깨볶음', '무엉채조림', '과일샐러드'],
    13: ['유채나물', '깻잎장아찌', '단무지', '봄동겉절이', '건취나물볶음', '치커리생채', '14|유채나물'],
    14: ['김치', '김치', '김치', '김치', '김치', '김치', '김치'],
    15: ['오예스/모과차', '요플레', '13|마가렛/사과쥬스', '14|호떡/야쿠르트', '바나나', '바나나/두유', '비피더스'],
    16: ['보리밥/야채죽', '차조밥/참깨죽', '잡곡밥/버섯죽', '보리밥/야채죽', '14|차조밥/흑임자죽', '잡곡밥/닭죽', '14|흑미밥/버섯죽'],
    17: ['꽃게탕', '비지국', '감자국', '동태국', '버섯무국', '근대국', '호박두부국'],
    18: ['야채계란말이', '주꾸미볶음', '갈치무조림', '호박부추전', '닭찜', '순대볶음', '오리훈제볶음'],
    19: ['연근땅콩조림', '단호박조림', '맛살오이냉채', '14|건새우마늘쫑볶음', '쑥갓두부무침', '14|느타리버섯볶음', '감자조림'],
    20: ['세발겉절이', '숙주나물', '양배추찜/쌈장', '유채나물', '물파래초무침', '14|돈나물오이무침', '씨레기나물'],
    21: ['김치', '김치', '김치', '김치', '김치', '김치', '김치']
};
var origin = {
    22: ['품목', '원산지', '품목', '원산지', '품목', '원산지', '품목'],
    23: ['쌀, 보리,흑미', '국내산', '13|잡곡(귀리,수수,콩)', '수입산', '닭고기,오리고기', '국내산', '햄(돈육/계육:국내산)'],
    24: ['12|김치(배추.고추가루)', '국내산', '돈육', '국내산', '소고기', '호주산', '섭산적(돈육:국내산)'],
    25: ['삼치', '국내산', '갈치', '남아공산', '동태', '러시아산', '우육:호주산,계육:국내산)'],
    26: ['주꾸미', '베트남산', '꽃게,해물', '중국산', '대두', '외국산', '순대(돈육:국내산)']
};
var labels = {
    2: [1, '', 'yellow'],
    3: [6, '조식', 'cyan'],
    9: [6, '중식', 'pink'],
    15: [1, '간식', 'green'],
    16: [6, '석식', 'yellow'],
    22: [6, '원<br>산<br>지<br>표<br>시', 'blue']
};
var heights = {1: 25, 15: 25, 23: 15, 24: 17, 25: 17, 26: 17, 27: 18};
var lastRow = 60, lastCol = 52;

function colName(n){
    return n > 26 ? 'A' + String.fromCharCode(38 + n) : String.fromCharCode(64 + n);
}
function text(value, extra){
    var cls = 't ' + (extra || '');
    var parts = value.split('|');
    if(parts.length > 1){
        cls += ' s' + parts[0];
        value = parts[1];
    }
    return '<div class="' + cls + '">' + value + '</div>';
}
function cell(cls, html, attrs){
    return '<td class="' + cls + '"' + (attrs || '') + '>' + html + '</td>';
}
function tableCells(row){
    var html = '', i, cls, extra;
    if(row == 1){
        return cell('title', text('주간식단표'.split('').join('&nbsp;&nbsp;&nbsp;')), ' colspan="8"');
    }
    if(labels[row]){
        html += cell('label ' + labels[row][2], text(labels[row][1]), ' rowspan="' + labels[row][0] + '"');
    }
    if(row == 27){
        return cell('note', text('14|* 고혈압- 저염식    당뇨식- 잡곡밥 *       * 상기 식단은 시장수급사정에 따라 달라질수 있습니다.'), ' colspan="7"');
    }
    for(i = 0; i < 7; i++){
        if(row == 2){
            html += cell('day' + (i == 6 ? ' sunday' : ''), text(days[i]));
        }
        else if(menu[row]){
            cls = row == 15 ? 'snack' : 'menu';
            if(row == 8 || row == 21) cls += ' endk';
            if(row == 14) cls += ' end';
            html += cell(cls, text(menu[row][i], row == 19 && i == 3 ? 'wrap' : ''));
        }
        else {
            cls = 'org ' + (row == 22 ? 'orghead' : i % 2 ? 'place' : 'item');
            extra = '';
            if(row == 24 && i == 0) cls += ' split24';
            if(row == 25 && i == 0) extra = 'light';
            if(i == 6 && row > 22){
                extra = 'plain';
                if(row == 23 || row == 25){
                    cls += ' open';
                    extra += ' spill';
                }
            }
            html += cell(cls, text(origin[row][i], extra));
        }
    }
    return html;
}
function build(){
    var html = '<colgroup><col class="cn"><col class="ca">', r, c, start, cls;
    for(c = 2; c <= lastCol; c++){
        html += '<col class="' + (c < 9 ? 'cw' : 'cd') + '">';
    }
    html += '</colgroup><thead><tr class="hd"><th class="corner"></th>';
    for(c = 1; c <= lastCol; c++){
        html += '<th' + (c == 11 ? ' class="sel"' : '') + '>' + colName(c) + '</th>';
    }
    html += '</tr></thead><tbody>';
    for(r = 1; r <= lastRow; r++){
        html += '<tr class="r' + (heights[r] || 20) + '"><th' + (r == 18 ? ' class="sel"' : '') + '>' + r + '</th>';
        start = 1;
        if(r <= 27){
            html += tableCells(r);
            start = 9;
        }
        for(c = start; c <= lastCol; c++){
            cls = '';
            if(c == 9 && r >= 4 && r <= 6) cls = 'blank';
            if(c == 9 && r == 12) cls = 'bar';
            if(c == 11 && r == 18) html += cell('cursor', '<div></div>');
            else if(c == 13 && r == 24) html += cell('', text(';', 'mark'));
            else html += cell(cls, '');
        }
        html += '</tr>';
    }
    document.getElementById('grid').innerHTML = html + '</tbody>';
}
build();
```
